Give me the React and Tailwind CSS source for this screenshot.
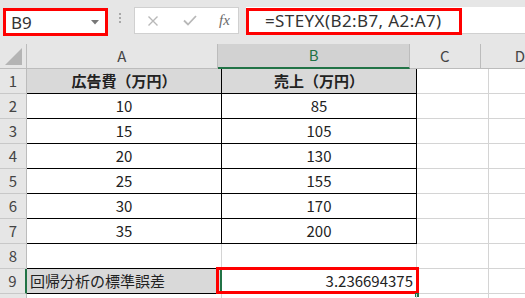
import React from 'react';

const cellFont = { fontFamily: '"Noto Sans CJK JP", "Noto Sans", sans-serif' };

const rows = [
  { n: 1, a: '広告費（万円）', b: '売上（万円）', head: true },
  { n: 2, a: '10', b: '85' },
  { n: 3, a: '15', b: '105' },
  { n: 4, a: '20', b: '130' },
  { n: 5, a: '25', b: '155' },
  { n: 6, a: '30', b: '170' },
  { n: 7, a: '35', b: '200' },
  { n: 8 },
  { n: 9, a: '回帰分析の標準誤差', b: '3.236694375', result: true },
  { n: 10, hidden: true },
];

const FormulaBar = () => (
  <div className="h-[44px] flex items-start" style={{ fontFamily: '"Noto Sans", "Open Sans", sans-serif' }}>
    {/* name box */}
    <div className="ml-[3px] mt-[8px] w-[105px] h-[28px] bg-white border-[3px] border-[#ff0000] flex items-center pl-[5px] pr-[6px]">
      <span className="text-[17px] text-[#333] leading-none">B9</span>
      <svg className="ml-auto" width="8" height="5" viewBox="0 0 8 5">
        <polygon points="0,0 8,0 4,4.5" fill="#777" />
      </svg>
    </div>
    <div className="ml-[11px] mt-[13px] flex flex-col gap-[2px]">
      <span className="w-[2px] h-[2px] bg-[#a8a8a8]" />
      <span className="w-[2px] h-[2px] bg-[#a8a8a8]" />
      <span className="w-[2px] h-[2px] bg-[#a8a8a8]" />
    </div>
    {/* cancel / enter / fx */}
    <div className="ml-[13px] mt-[7px] w-[105px] h-[27px] bg-white border border-[#d0d0d0] flex items-center">
      <svg className="ml-[12px]" width="12" height="12" viewBox="0 0 12 12">
        <path d="M1.5 1.5 L10.5 10.5 M10.5 1.5 L1.5 10.5" stroke="#b8b8b8" strokeWidth="1.4" fill="none" />
      </svg>
      <svg className="ml-[24px]" width="14" height="11" viewBox="0 0 14 11">
        <path d="M1 5.5 L5 9.5 L13 1" stroke="#b8b8b8" strokeWidth="1.8" fill="none" />
      </svg>
      <span className="ml-[22px] text-[15px] italic text-[#6a6a6a] leading-none" style={{ fontFamily: '"Liberation Serif", serif' }}>
        fx
      </span>
    </div>
    {/* formula input */}
    <div className="relative ml-[7px] mt-[7px] flex-1 h-[27px] bg-white border-b border-[#d0d0d0]">
      <div className="absolute left-0 top-[1px] w-[216px] h-[27px] border-[3px] border-[#ff0000]" />
      <span className="absolute left-[19px] top-[4px] text-[17px] tracking-[0.4px] text-[#333] leading-[19px] whitespace-nowrap">
        =STEYX(B2:B7, A2:A7)
      </span>
    </div>
  </div>
);

const HeaderRow = () => (
  <div className="flex h-[25px] text-[15px] text-[#444]" style={cellFont}>
    <div className="w-[27px] border-r border-b border-[#bcbcbc] flex items-end justify-end pr-[3px] pb-[3px]">
      <svg width="18" height="17" viewBox="0 0 18 17">
        <polygon points="17,0 17,17 0,17" fill="#b4b4b4" />
      </svg>
    </div>
    <div className="w-[195px] border-r border-b border-[#bcbcbc] flex items-center justify-center">A</div>
    <div className="w-[195px] border-r border-[#bcbcbc] border-b-2 border-b-[#217346] bg-[#d2d2d2] text-[#217346] flex items-center justify-center">
      B
    </div>
    <div className="w-[72px] border-r border-b border-[#bcbcbc] flex items-center justify-center">C</div>
    <div className="flex-1 border-b border-[#bcbcbc] flex items-center pl-[34px]">D</div>
  </div>
);

const Row = ({ r }) => {
  const boxed = r.a !== undefined && !r.result;
  const rowHead = r.result
    ? 'bg-[#d2d2d2] text-[#3f6b4c] border-r-2 border-r-[#217346]'
    : 'border-r border-r-[#bcbcbc]';
  const aCls = r.result
    ? 'bg-[#d9d9d9] border-r-black border-b-black justify-start pl-[3px]'
    : boxed
    ? (r.head ? 'bg-[#d9d9d9] font-bold ' : '') + 'border-r-black border-b-black justify-center'
    : r.n === 8
    ? 'border-b-black'
    : '';
  const bCls = r.result
    ? 'justify-end pr-[3px]'
    : boxed
    ? (r.head ? 'bg-[#d9d9d9] font-bold ' : '') + 'border-r-black border-b-black justify-center'
    : '';
  return (
    <div className="flex h-[25px] text-[15px] text-[#222]" style={cellFont}>
      <div className={'w-[27px] border-b border-b-[#c8c8c8] bg-[#e6e6e6] flex items-center justify-center text-[#444] ' + rowHead}>
        {!r.hidden && r.n}
      </div>
      <div className={'w-[195px] border-r border-b border-[#d4d4d4] flex items-center whitespace-nowrap ' + aCls}>
        {r.a}
      </div>
      <div className={'relative w-[195px] border-r border-b border-[#d4d4d4] flex items-center whitespace-nowrap ' + bCls}>
        {r.b}
        {r.result && (
          <>
            <div className="absolute left-[-2px] top-[-1px] w-[2px] h-[25px] bg-[#217346]" />
            <div className="absolute left-[-6px] top-[-2px] w-[203px] h-[27px] border-[3px] border-[#ff0000]" />
            <div className="absolute right-[-3px] bottom-[-4px] w-[4px] h-[4px] bg-[#217346]" />
          </>
        )}
      </div>
      <div className="w-[72px] border-r border-b border-[#d4d4d4]" />
      <div className="flex-1 border-b border-[#d4d4d4]" />
    </div>
  );
};

export default function App() {
  return (
    <div className="w-[525px] h-[298px] overflow-hidden bg-[#e6e6e6]">
      <FormulaBar />
      <HeaderRow />
      <div className="bg-white">
        {rows.map((r) => (
          <Row key={r.n} r={r} />
        ))}
      </div>
    </div>
  );
}
